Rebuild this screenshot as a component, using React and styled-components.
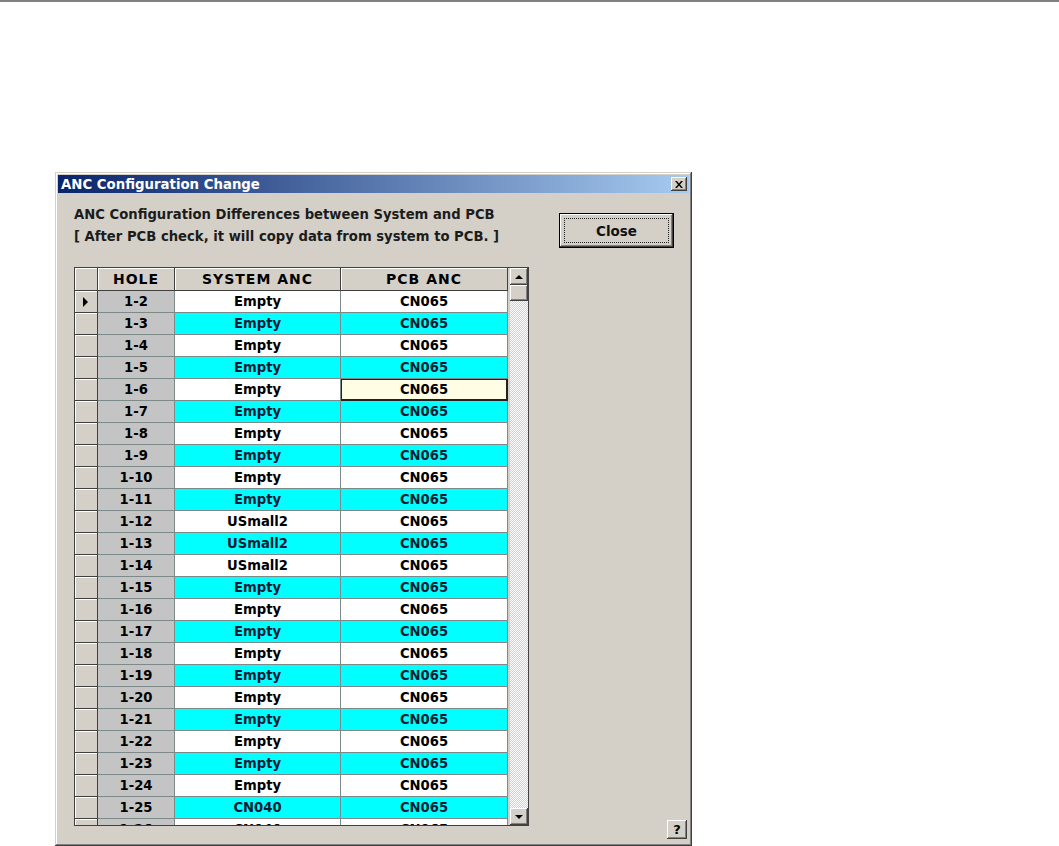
import React from "react";
import styled, { createGlobalStyle, css } from "styled-components";

const GlobalStyle = createGlobalStyle`
  html, body { margin: 0; padding: 0; background: #ffffff; }
  body { font-family: "DejaVu Sans", "Liberation Sans", sans-serif; }
`;

const FACE = "#d4d0c8";

const raised = css`
  box-shadow: inset -1px -1px #404040, inset 1px 1px #ffffff,
    inset -2px -2px #808080, inset 2px 2px ${FACE};
`;

const TopRule = styled.div`
  height: 2px;
  background: #808080;
`;

const Stage = styled.div`
  padding: 170px 0 0 55px;
`;

const Window = styled.div`
  box-sizing: border-box;
  width: 637px;
  height: 674px;
  background: ${FACE};
  padding: 3px;
  display: flex;
  flex-direction: column;
  box-shadow: inset -1px -1px #404040, inset 1px 1px ${FACE},
    inset -2px -2px #808080, inset 2px 2px #ffffff;
`;

const TitleBar = styled.div`
  height: 18px;
  display: flex;
  align-items: center;
  justify-content: space-between;
  padding: 0 2px 0 3px;
  background: linear-gradient(to right, #0a246a, #a6caf0);
`;

const Title = styled.span`
  color: #ffffff;
  font-weight: bold;
  font-size: 13.3px;
`;

const CaptionButton = styled.div`
  box-sizing: border-box;
  width: 16px;
  height: 14px;
  background: ${FACE};
  ${raised};
  display: flex;
  align-items: center;
  justify-content: center;
`;

const Client = styled.div`
  flex: 1;
  display: flex;
  justify-content: space-between;
  padding: 11px 2px 4px 16px;
`;

const LeftPane = styled.div`
  display: flex;
  flex-direction: column;
`;

const Message = styled.div`
  font-size: 13.2px;
  font-weight: bold;
  line-height: 22px;
  color: #1c1c1c;
  white-space: nowrap;
`;

const GridFrame = styled.div`
  margin-top: 19px;
  width: 453px;
  height: 557px;
  border: 1px solid #404040;
  display: flex;
  background: ${FACE};
`;

const Table = styled.div`
  width: 433px;
  height: 557px;
  overflow: hidden;
  margin-right: 2px;
`;

const Row = styled.div`
  display: grid;
  grid-template-columns: 23px 77px 166px 167px;
  height: ${(p) => (p.$head ? 23 : 22)}px;
`;

const Cell = styled.div`
  box-sizing: border-box;
  display: flex;
  align-items: center;
  justify-content: center;
  font-size: 13.2px;
  font-weight: bold;
  border-right: 1px solid #7c8a8a;
  border-bottom: 1px solid #7c8a8a;
  background: ${(p) => p.$bg};
  color: ${(p) => (p.$bg === "#00ffff" ? "#0c1c34" : "#000000")};
  ${(p) =>
    p.$selected &&
    css`
      background: #fffde4;
      box-shadow: inset 0 0 0 1px #222222;
      border-color: #222222;
    `}
`;

const HeadCell = styled.div`
  box-sizing: border-box;
  display: flex;
  align-items: center;
  justify-content: center;
  font-size: 14px;
  letter-spacing: 1px;
  font-weight: bold;
  color: #000;
  background: ${FACE};
  border-right: 1px solid #404040;
  border-bottom: 1px solid #404040;
  box-shadow: inset 1px 1px #ffffff;
`;

const Indicator = styled.div`
  box-sizing: border-box;
  display: flex;
  align-items: center;
  justify-content: center;
  background: ${FACE};
  border-right: 1px solid #404040;
  border-bottom: 1px solid #404040;
  box-shadow: inset 1px 1px #ffffff;
`;

const Arrow = styled.span`
  width: 0;
  height: 0;
  border-top: 5px solid transparent;
  border-bottom: 5px solid transparent;
  border-left: 5px solid #000;
  margin-left: -2px;
`;

const ScrollBar = styled.div`
  width: 18px;
  height: 557px;
  display: flex;
  flex-direction: column;
  background: repeating-conic-gradient(${FACE} 0 25%, #ffffff 0 50%) 0 0 / 2px 2px;
`;

const ScrollButton = styled.div`
  box-sizing: border-box;
  width: 18px;
  height: ${(p) => p.$h || 17}px;
  background: ${FACE};
  ${raised};
  display: flex;
  align-items: center;
  justify-content: center;
  margin-top: ${(p) => (p.$end ? "auto" : "0")};
`;

const Tri = styled.span`
  width: 0;
  height: 0;
  border-left: 4px solid transparent;
  border-right: 4px solid transparent;
  ${(p) =>
    p.$down
      ? css`border-top: 4px solid #000;`
      : css`border-bottom: 4px solid #000;`}
`;

const RightPane = styled.div`
  display: flex;
  flex-direction: column;
  align-items: flex-end;
  justify-content: space-between;
`;

const CloseButton = styled.button`
  box-sizing: border-box;
  width: 115px;
  height: 35px;
  margin: 9px 13px 0 0;
  padding: 0;
  border: 1px solid #000;
  background: ${FACE};
  box-shadow: inset -1px -1px #404040, inset 1px 1px #ffffff,
    inset -2px -2px #808080;
  font-family: inherit;
  font-size: 13.5px;
  font-weight: bold;
  color: #111;
  display: flex;
  align-items: center;
  justify-content: center;
  position: relative;
  &::after {
    content: "";
    position: absolute;
    inset: 4px;
    border: 1px dotted #202020;
  }
`;

const HelpButton = styled.div`
  box-sizing: border-box;
  width: 20px;
  height: 19px;
  background: ${FACE};
  ${raised};
  font-size: 13px;
  font-weight: bold;
  display: flex;
  align-items: center;
  justify-content: center;
`;

const rows = [
  ["1-2", "Empty"],
  ["1-3", "Empty"],
  ["1-4", "Empty"],
  ["1-5", "Empty"],
  ["1-6", "Empty"],
  ["1-7", "Empty"],
  ["1-8", "Empty"],
  ["1-9", "Empty"],
  ["1-10", "Empty"],
  ["1-11", "Empty"],
  ["1-12", "USmall2"],
  ["1-13", "USmall2"],
  ["1-14", "USmall2"],
  ["1-15", "Empty"],
  ["1-16", "Empty"],
  ["1-17", "Empty"],
  ["1-18", "Empty"],
  ["1-19", "Empty"],
  ["1-20", "Empty"],
  ["1-21", "Empty"],
  ["1-22", "Empty"],
  ["1-23", "Empty"],
  ["1-24", "Empty"],
  ["1-25", "CN040"],
  ["1-26", "CN040"],
];

export default function App() {
  return (
    <>
      <GlobalStyle />
      <TopRule />
      <Stage>
        <Window>
          <TitleBar>
            <Title>ANC Configuration Change</Title>
            <CaptionButton>
              <svg width="8" height="7" viewBox="0 0 8 7">
                <path d="M0 0h2l2 2.5L6 0h2L5 3.5 8 7H6L4 4.5 2 7H0l3-3.5z" fill="#000" />
              </svg>
            </CaptionButton>
          </TitleBar>
          <Client>
            <LeftPane>
              <Message>ANC Configuration Differences between System and PCB</Message>
              <Message>[ After PCB check, it will copy data from system to PCB. ]</Message>
              <GridFrame>
                <Table>
                  <Row $head>
                    <HeadCell />
                    <HeadCell>HOLE</HeadCell>
                    <HeadCell>SYSTEM ANC</HeadCell>
                    <HeadCell>PCB ANC</HeadCell>
                  </Row>
                  {rows.map(([hole, sys], i) => {
                    const bg = i % 2 === 0 ? "#ffffff" : "#00ffff";
                    return (
                      <Row key={hole}>
                        <Indicator>{i === 0 && <Arrow />}</Indicator>
                        <Cell $bg="#c4c4c4">{hole}</Cell>
                        <Cell $bg={bg}>{sys}</Cell>
                        <Cell $bg={bg} $selected={hole === "1-6"}>CN065</Cell>
                      </Row>
                    );
                  })}
                </Table>
                <ScrollBar>
                  <ScrollButton>
                    <Tri />
                  </ScrollButton>
                  <ScrollButton $h={16} />
                  <ScrollButton $end>
                    <Tri $down />
                  </ScrollButton>
                </ScrollBar>
              </GridFrame>
            </LeftPane>
            <RightPane>
              <CloseButton>Close</CloseButton>
              <HelpButton>?</HelpButton>
            </RightPane>
          </Client>
        </Window>
      </Stage>
    </>
  );
}
